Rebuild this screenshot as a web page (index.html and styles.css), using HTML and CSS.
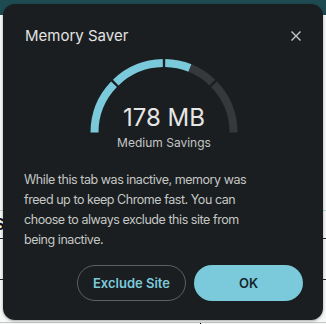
FILE: index.html
```html
<!DOCTYPE html>
<html>
<head>
<meta charset="utf-8">
<link rel="stylesheet" href="styles.css">
</head>
<body>
<div class="backdrop">
  <div class="band"></div>
  <div class="area"></div>
  <div class="rule rule-green"></div>
  <div class="row-s"><span class="ghost">S</span></div>
  <div class="rule rule-dark"></div>
  <div class="row-a"></div>
  <div class="rule rule-dark"></div>
  <div class="row-b"></div>
  <div class="rule rule-gray"></div>
  <div class="tail"><div class="vline"></div></div>
</div>

<div class="dialog">
  <div class="header">
    <div class="title">Memory Saver</div>
    <div class="close">
      <svg width="12" height="12" viewBox="0 0 12 12"><path d="M1.5 1.5 L10.5 10.5 M10.5 1.5 L1.5 10.5" stroke="#c4c7c5" stroke-width="1.4" fill="none"/></svg>
    </div>
  </div>

  <div class="gauge">
    <svg class="arc" width="148" height="76" viewBox="0 0 148 76">
      <g fill="none" stroke-width="8">
        <path d="M4.5 73.5 A69.5 69.5 0 0 1 24.01 25.22" stroke="#7bcadb"/>
        <path d="M25.72 23.51 A69.5 69.5 0 0 1 72.79 4.01" stroke="#7bcadb"/>
        <path d="M75.21 4.01 A69.5 69.5 0 0 1 100.03 9.06" stroke="#7bcadb"/>
        <path d="M100.03 9.06 A69.5 69.5 0 0 1 122.28 23.51" stroke="#35393c"/>
        <path d="M123.99 25.22 A69.5 69.5 0 0 1 143.5 73.5" stroke="#35393c"/>
      </g>
    </svg>
    <div class="amount">178 MB</div>
    <div class="level">Medium Savings</div>
  </div>

  <p class="body">While this tab was inactive, memory was<br>freed up to keep Chrome fast. You can<br>choose to always exclude this site from<br>being inactive.</p>

  <div class="actions">
    <button class="btn btn-outline">Exclude Site</button>
    <button class="btn btn-fill">OK</button>
  </div>
</div>
</body>
</html>
```

FILE: styles.css
```css
html, body {
  margin: 0;
  padding: 0;
}
body {
  width: 326px;
  height: 324px;
  overflow: hidden;
  position: relative;
  background: #f6f7f7;
  font-family: Inter, "Noto Sans", sans-serif;
}
.backdrop {
  display: flex;
  flex-direction: column;
}
.band { height: 15px; background: #1e4a51; }
.area { height: 195px; }
.rule { height: 1px; }
.rule-green { background: #b9d8c4; }
.rule-dark { background: #2a2a2a; }
.rule-gray { background: #c8c8c8; }
.row-s { height: 27px; font: bold 16px "Liberation Sans", sans-serif; color: #111; line-height: 27px; }
.ghost { display: inline-block; margin-left: -6px; }
.row-a { height: 40px; }
.row-b { height: 42px; }
.tail { height: 1px; }
.vline { margin-left: 200px; width: 1px; height: 100%; background: #000; }

.dialog {
  position: absolute;
  left: 3px;
  top: 4px;
  width: 320px;
  height: 316px;
  box-sizing: border-box;
  padding: 22px 20px 19px 21px;
  background: #1b1e20;
  border-radius: 12px;
  box-shadow: 0 1px 3px rgba(0,0,0,0.35);
  display: flex;
  flex-direction: column;
}
.header {
  display: flex;
  justify-content: space-between;
  align-items: center;
  height: 20px;
}
.title {
  font-size: 15px;
  line-height: 20px;
  color: #e3e3e3;
  font-weight: 400;
  margin-left: 1px;
}
.close {
  width: 12px;
  height: 12px;
  margin-right: 1px;
  display: flex;
}
.gauge {
  position: relative;
  align-self: center;
  width: 148px;
  margin-top: 13px;
  padding-top: 45px;
  display: flex;
  flex-direction: column;
  align-items: center;
  margin-left: 1px;
}
.arc {
  position: absolute;
  left: 0;
  top: 0;
}
.amount {
  font-size: 24px;
  line-height: 28px;
  color: #e6e6e6;
}
.level {
  margin-top: 3px;
  font-size: 12px;
  line-height: 16px;
  color: #c4c7c5;
}
.body {
  margin: 19px 0 0 0;
  font-size: 12.5px;
  letter-spacing: -0.45px;
  line-height: 20px;
  white-space: nowrap;
  color: #c4c7c5;
}
.actions {
  margin-top: 15px;
  display: flex;
  justify-content: flex-end;
  gap: 8px;
}
.btn {
  width: 109px;
  height: 36px;
  border-radius: 18px;
  font-family: Inter, "Noto Sans", sans-serif;
  font-size: 13px;
  font-weight: 600;
  cursor: pointer;
}
.btn-outline {
  background: transparent;
  border: 1px solid #5b6164;
  color: #7bcadb;
}
.btn-fill {
  background: #7bcadb;
  border: none;
  color: #13272c;
}
```
